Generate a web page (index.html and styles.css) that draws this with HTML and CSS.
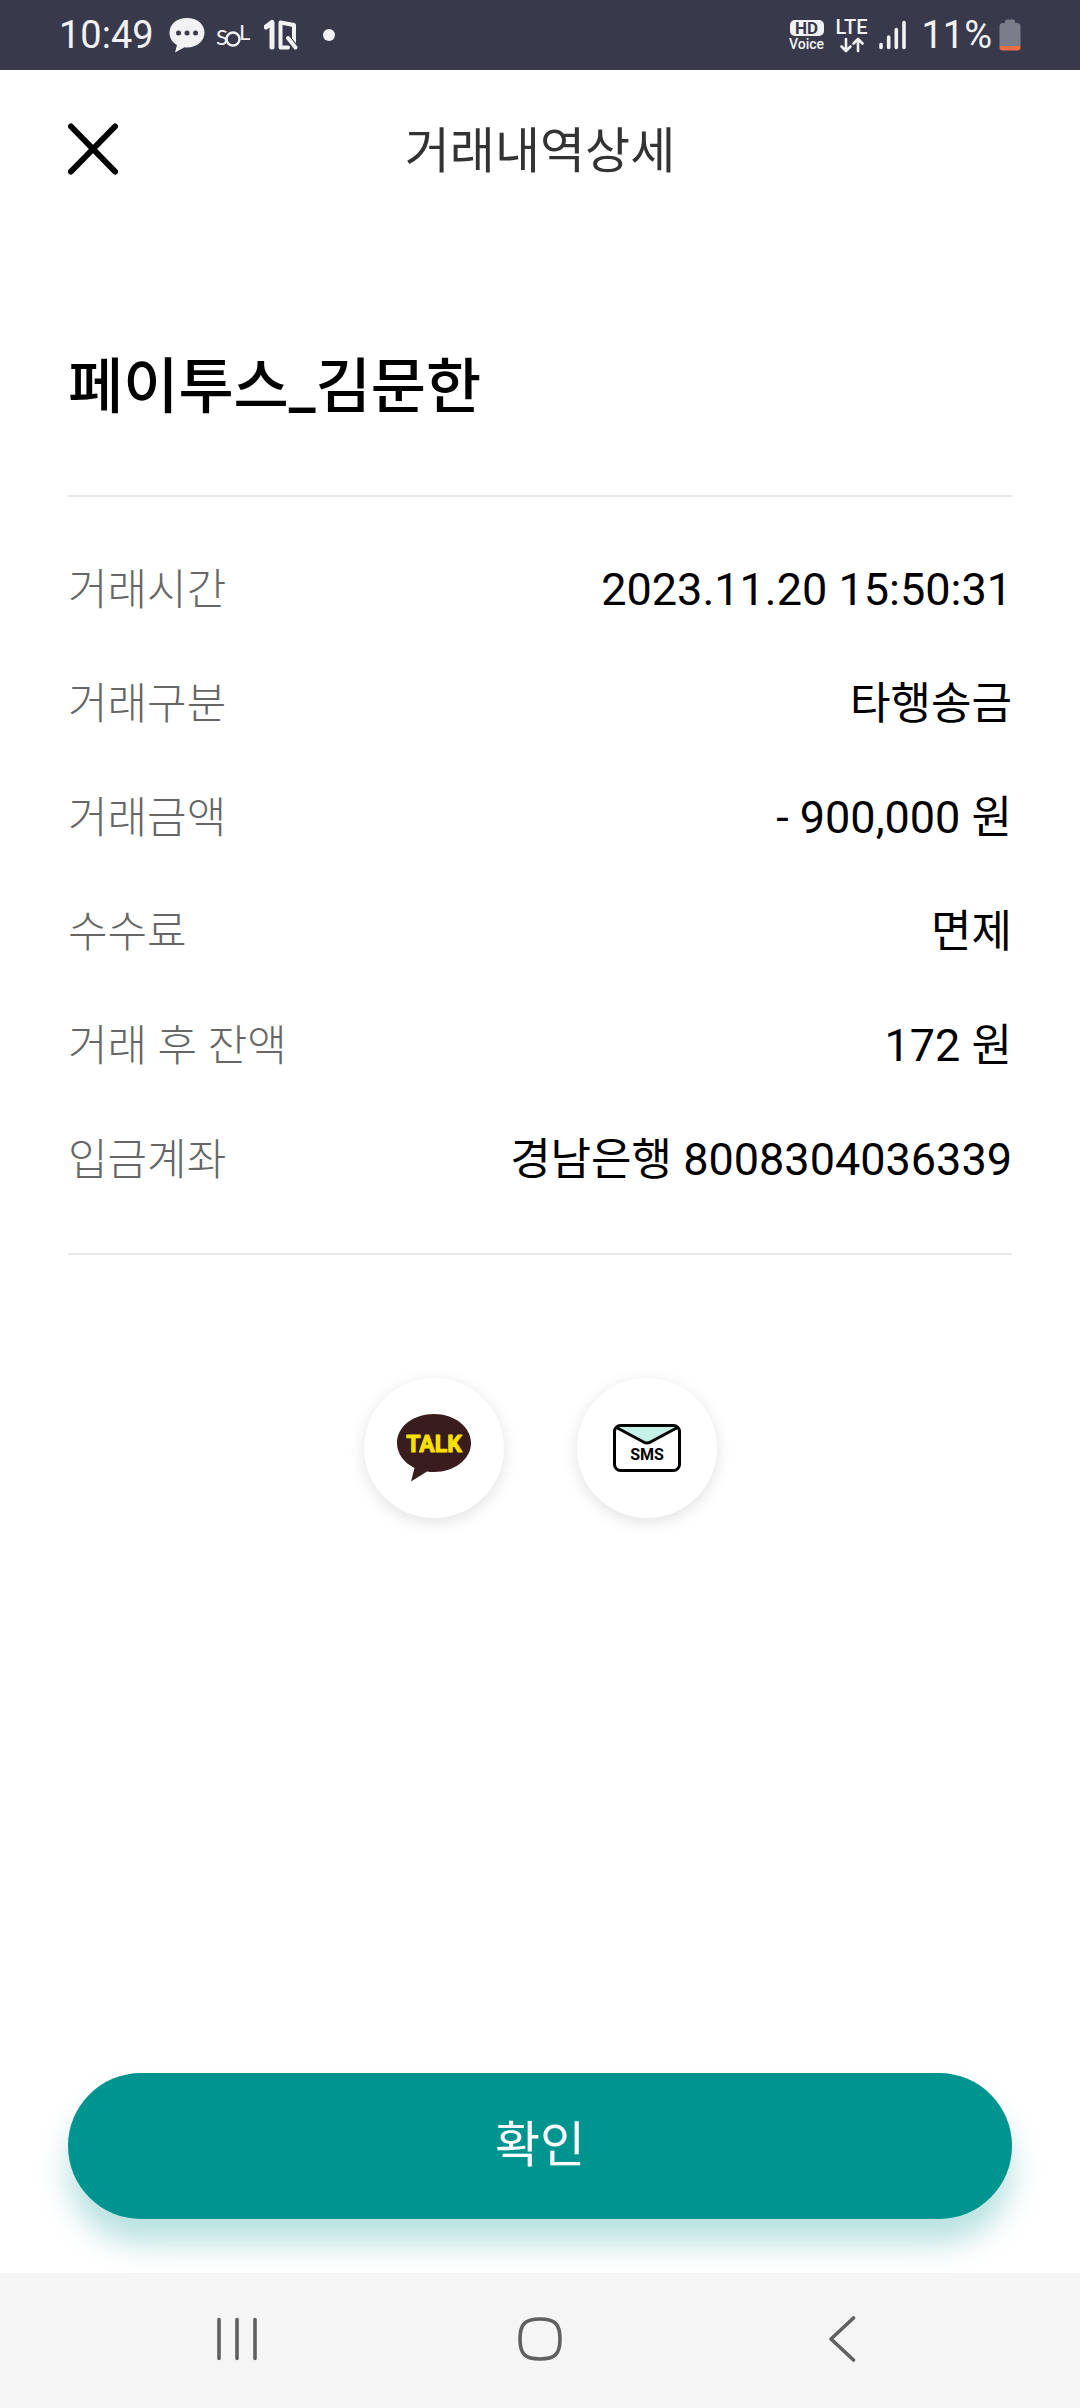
FILE: index.html
```html
<!DOCTYPE html>
<html lang="ko">
<head>
<meta charset="utf-8">
<meta name="viewport" content="width=device-width, initial-scale=1">
<title>거래내역상세</title>
<link rel="stylesheet" href="styles.css">
</head>
<body>
<div class="screen">
  <div class="status-bar">
    <div class="status-left">
      <span class="status-text">10:49</span>
      <svg class="icon-chat" width="36" height="36" viewBox="0 0 36 36" aria-hidden="true">
        <path fill="#f2f2f4" d="M18 1C8 1 .5 7 .5 15.500c0 5.500 3 10 7.500 12.500L6 35.500l9.500-5.200c.8.100 1.600.200 2.500.200 10 0 17.500-6.500 17.500-15S28 1 18 1z"/>
        <circle cx="9.500" cy="16" r="2.500" fill="#383a4c"/><circle cx="18" cy="16" r="2.500" fill="#383a4c"/><circle cx="26.500" cy="16" r="2.500" fill="#383a4c"/>
      </svg>
      <svg class="icon-sol" width="38" height="34" viewBox="0 -2 38 34" role="img" aria-label="SOL">
        <g class="sol-text" fill="#f2f2f4"><text x="1" y="25">S</text><text x="24" y="20">L</text></g>
        <circle cx="18" cy="19" r="6.500" fill="none" stroke="#f2f2f4" stroke-width="2.400"/>
      </svg>
      <svg class="icon-oneq" width="34" height="32" viewBox="0 0 34 32" role="img" aria-label="1Q">
        <path d="M2 8L8 3.500V28" fill="none" stroke="#f2f2f4" stroke-width="5" stroke-linejoin="round" stroke-linecap="round"/>
        <path d="M24 28.500H16.500V3.500L30 6V23" fill="none" stroke="#f2f2f4" stroke-width="4" stroke-linejoin="round" stroke-linecap="round"/>
        <path d="M24 19L31.500 28.500" stroke="#383a4c" stroke-width="6"/>
        <path d="M24 19L31.500 28.500" stroke="#f2f2f4" stroke-width="4" stroke-linecap="round"/>
      </svg>
      <span class="status-dot"></span>
    </div>
    <div class="status-right">
      <div class="hd-voice"><span class="hd">HD</span><span class="voice">Voice</span></div>
      <div class="lte">
        <span class="lte-text">LTE</span>
        <svg width="26" height="16" viewBox="0 0 26 16" fill="none" stroke="#f2f2f4" stroke-width="2.600" stroke-linecap="round" stroke-linejoin="round" aria-hidden="true">
          <path d="M7 2V13.500M2.500 9.500L7 14l4.500-4.500M19 14V2.500M14.500 6.500L19 2l4.500 4.500"/>
        </svg>
      </div>
      <svg class="icon-signal" width="28" height="30" viewBox="0 0 28 30" stroke="#f2f2f4" stroke-width="3.600" stroke-linecap="round" aria-hidden="true">
        <path d="M2 24.500V27.500M9.700 17V27.500M17.300 9.500V27.500M25 2.500V27.500"/>
      </svg>
      <span class="status-text">11%</span>
      <svg class="icon-battery" width="22" height="32" viewBox="0 0 22 32" aria-hidden="true">
        <path fill="#7c7d8a" d="M6 4V2.500A2 2 0 0 1 8 .5h6a2 2 0 0 1 2 2V4h2a3.500 3.500 0 0 1 3.500 3.500V27H.5V7.500A3.500 3.500 0 0 1 4 4z"/>
        <path fill="#f07045" d="M.5 27h21v1.500A3 3 0 0 1 18.500 31.500h-15A3 3 0 0 1 .5 28.500z"/>
      </svg>
    </div>
  </div>

  <header class="app-header">
    <button class="close-button" type="button" aria-label="닫기">
      <svg width="50" height="52" viewBox="0 0 50 52" stroke="#000" stroke-width="6" stroke-linecap="round" aria-hidden="true"><path d="M3 3.500L47 48.500M47 3.500L3 48.500"/></svg>
    </button>
    <h1 class="app-title">거래내역상세</h1>
  </header>

  <main class="content">
    <h2 class="payee">페이투스_김문한</h2>
    <dl class="details">
      <div class="row"><dt>거래시간</dt><dd>2023.11.20 15:50:31</dd></div>
      <div class="row"><dt>거래구분</dt><dd><span class="ko">타행송금</span></dd></div>
      <div class="row"><dt>거래금액</dt><dd>- 900,000 <span class="ko">원</span></dd></div>
      <div class="row"><dt>수수료</dt><dd><span class="ko">면제</span></dd></div>
      <div class="row"><dt>거래 후 잔액</dt><dd>172 <span class="ko">원</span></dd></div>
      <div class="row"><dt>입금계좌</dt><dd><span class="ko">경남은행</span> 8008304036339</dd></div>
    </dl>
    <div class="share">
      <button class="share-button" type="button" aria-label="카카오톡 공유">
        <svg width="76" height="70" viewBox="0 0 76 70" aria-hidden="true">
          <path fill="#391d1e" d="M38 1C17.500 1 1 13.500 1 30c0 10.500 7 19.800 17.500 25L15 68.500 31 58.400c2.300.400 4.600.600 7 .600 20.500 0 37-12.800 37-29S58.500 1 38 1z"/>
          <text class="talk-text" x="38" y="39" text-anchor="middle">TALK</text>
        </svg>
      </button>
      <button class="share-button" type="button" aria-label="문자 공유">
        <svg width="68" height="48" viewBox="0 0 68 48" aria-hidden="true">
          <path fill="#c5f1e7" d="M3 3H65L37 17.500Q34 19 31 17.500z"/>
          <rect x="1.500" y="1.500" width="65" height="45" rx="6" fill="none" stroke="#000" stroke-width="3"/>
          <path d="M3.500 3.500L30.500 18Q34 20 37.500 18L64.500 3.500" fill="none" stroke="#000" stroke-width="3"/>
          <text class="sms-text" x="34" y="36" text-anchor="middle">SMS</text>
        </svg>
      </button>
    </div>
    <button class="confirm-button" type="button">확인</button>
  </main>

  <nav class="nav-bar" aria-label="시스템 탐색">
    <button class="nav-button" type="button" aria-label="최근 앱">
      <svg width="46" height="46" viewBox="0 0 46 46" stroke="#606060" stroke-width="3.600" stroke-linecap="round"><path d="M5 3.500V42.500M23 3.500V42.500M41 3.500V42.500"/></svg>
    </button>
    <button class="nav-button" type="button" aria-label="홈">
      <svg width="46" height="46" viewBox="0 0 46 46" fill="none" stroke="#606060" stroke-width="3.600"><path d="M23 3C8 3 3 8 3 23s5 20 20 20 20-5 20-20S38 3 23 3z"/></svg>
    </button>
    <button class="nav-button" type="button" aria-label="뒤로">
      <svg width="46" height="46" viewBox="0 0 46 46" fill="none" stroke="#606060" stroke-width="3.600" stroke-linecap="round" stroke-linejoin="round"><path d="M33.500 2L11 23l22.500 21"/></svg>
    </button>
  </nav>
</div>
</body>
</html>
```
FILE: styles.css
```css
* {
  box-sizing: border-box;
}

body {
  margin: 0;
  background: #fff;
  color: #000;
  font-family: Roboto, "Noto Sans CJK KR", sans-serif;
}

button {
  margin: 0;
  padding: 0;
  border: 0;
  background: none;
  font-family: inherit;
  cursor: pointer;
}

svg {
  display: block;
}

h1,
h2,
dl,
dd {
  margin: 0;
}

.screen {
  display: flex;
  flex-direction: column;
  min-height: 100vh;
}

/* System status bar */

.status-bar {
  display: flex;
  justify-content: space-between;
  align-items: center;
  height: 70px;
  padding: 0 59px;
  background: #383a4c;
  color: #f2f2f4;
}

.status-left,
.status-right {
  display: flex;
  align-items: center;
}

.status-text {
  font-size: 38px;
  line-height: 46px;
}

.icon-chat {
  margin-left: 15px;
}

.icon-sol {
  margin-left: 10px;
}

.sol-text {
  font-family: Lato, sans-serif;
  font-size: 22px;
}

.icon-oneq {
  margin-left: 11px;
}

.status-dot {
  width: 12px;
  height: 12px;
  margin-left: 25px;
  border-radius: 50%;
  background: #f2f2f4;
}

.hd-voice {
  display: flex;
  flex-direction: column;
  align-items: center;
  gap: 1px;
  width: 34px;
}

.hd {
  width: 34px;
  border-radius: 5px;
  background: #f2f2f4;
  color: #383a4c;
  font-size: 17px;
  font-weight: 700;
  line-height: 16px;
  text-align: center;
}

.voice {
  font-size: 14px;
  font-weight: 500;
  line-height: 14px;
}

.lte {
  display: flex;
  flex-direction: column;
  align-items: center;
  gap: 1px;
  margin: 0 12px;
}

.lte-text {
  font-size: 20px;
  font-weight: 500;
  line-height: 18px;
}

.icon-signal {
  margin-right: 14px;
}

.icon-battery {
  margin-left: 7px;
}

/* App header */

.app-header {
  display: grid;
  grid-template-columns: 50px 1fr 50px;
  align-items: center;
  height: 158px;
  padding: 0 68px;
}

.app-title {
  padding-bottom: 4px;
  color: #333;
  font-family: "Noto Sans CJK KR", sans-serif;
  font-size: 49px;
  font-weight: 400;
  line-height: 72px;
  text-align: center;
}

/* Transaction details */

.content {
  display: flex;
  flex: 1;
  flex-direction: column;
  padding: 120px 68px 54px;
}

.payee {
  font-size: 60px;
  font-weight: 500;
  line-height: 80px;
}

.details {
  margin-top: 67px;
  padding: 36px 0;
  border-top: 2px solid #e6e7eb;
  border-bottom: 2px solid #e8e8e8;
}

.row {
  display: flex;
  justify-content: space-between;
  align-items: center;
  height: 114px;
}

dt {
  color: #666;
  font-size: 43px;
  font-weight: 300;
  line-height: 64px;
}

dd {
  font-size: 45px;
  line-height: 64px;
}

.ko {
  font-size: 44px;
}

/* Share actions */

.share {
  display: flex;
  justify-content: center;
  gap: 73px;
  margin: 123px 0 80px;
}

.share-button {
  display: flex;
  justify-content: center;
  align-items: center;
  width: 140px;
  height: 140px;
  border-radius: 50%;
  background: #fff;
  box-shadow: 0 4px 16px rgba(0, 0, 0, 0.12);
}

.talk-text {
  fill: #fae100;
  stroke: #fae100;
  stroke-width: 1px;
  stroke-linejoin: round;
  font-family: Roboto, sans-serif;
  font-size: 23px;
  font-weight: 700;
}

.sms-text {
  font-family: Roboto, sans-serif;
  font-size: 16px;
  font-weight: 700;
}

.confirm-button {
  height: 146px;
  margin-top: auto;
  border-radius: 73px;
  background: #009490;
  box-shadow: 0 24px 30px rgba(0, 148, 144, 0.28);
  color: #fff;
  font-size: 49px;
  line-height: 72px;
}

/* System navigation */

.nav-bar {
  display: flex;
  justify-content: space-between;
  align-items: center;
  height: 135px;
  padding: 0 214px 4px;
  background: #f5f5f5;
}
```
